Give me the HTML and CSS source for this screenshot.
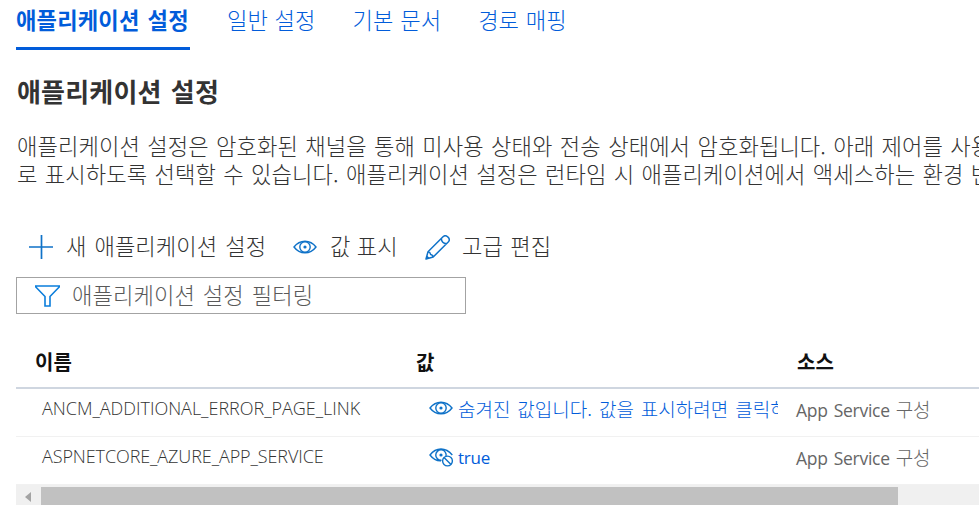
FILE: index.html
```html
<!DOCTYPE html>
<html lang="ko">
<head>
<meta charset="utf-8">
<title>애플리케이션 설정</title>
<link rel="stylesheet" href="styles.css">
</head>
<body>
<svg width="0" height="0" class="defs">
  <symbol id="eye" viewBox="0 0 24 14"><g fill="none" stroke="currentColor" stroke-width="1.4"><path d="M1 7C4 3 8 1.200 12 1.200s8 1.800 11 5.800c-3 4-7 5.800-11 5.800S4 11 1 7z"/><circle cx="12" cy="7" r="5.2"/></g><circle cx="12" cy="7" r="1.6" fill="currentColor"/></symbol>
</svg>
<nav class="tabs">
  <a class="tab active"><span>애플리케이션 설정</span></a>
  <a class="tab">일반 설정</a>
  <a class="tab">기본 문서</a>
  <a class="tab">경로 매핑</a>
</nav>
<h1>애플리케이션 설정</h1>
<p class="intro">애플리케이션 설정은 암호화된 채널을 통해 미사용 상태와 전송 상태에서 암호화됩니다. 아래 제어를 사용<br>로 표시하도록 선택할 수 있습니다. 애플리케이션 설정은 런타임 시 애플리케이션에서 액세스하는 환경 변</p>
<div class="toolbar">
  <a class="cmd add"><svg width="24" height="24" viewBox="0 0 24 24"><path d="M12.500 0v24M0 12h24" fill="none" stroke="currentColor" stroke-width="1.7"/></svg><span>새 애플리케이션 설정</span></a>
  <a class="cmd show"><svg width="24" height="14"><use href="#eye"/></svg><span>값 표시</span></a>
  <a class="cmd edit"><svg width="25" height="25" viewBox="0 0 25 25"><g fill="none" stroke="currentColor" stroke-width="1.5" stroke-linejoin="round"><path d="M1 24l2-7.200L18 1.800c1.300-1.300 3.200-1.300 4.600 0l.6.6c1.300 1.300 1.300 3.200 0 4.600L8.200 22zM3 16.800c1.400.2 2.300.7 2.600 2.600 1.600.2 2.300 1.200 2.600 2.600M16.300 3.500c.2 3 2 5 5.200 5.200"/></g><path d="M1 24l1-3.600L4.600 23z" fill="currentColor"/></svg><span>고급 편집</span></a>
</div>
<div class="filter">
  <svg width="25" height="22" viewBox="0 0 25 22"><path d="M.8 1h23.400v1L15 11.500V21h-5v-9.500L.8 2z" fill="none" stroke="currentColor" stroke-width="1.6"/></svg>
  <span>애플리케이션 설정 필터링</span>
</div>
<div class="grid">
  <div class="row head"><div>이름</div><div>값</div><div>소스</div></div>
  <div class="row">
    <div class="name">ANCM_ADDITIONAL_ERROR_PAGE_LINK</div>
    <div class="value"><svg width="24" height="14"><use href="#eye"/></svg><span class="hidden">숨겨진 값입니다. 값을 표시하려면 클릭하</span></div>
    <div class="source">App Service <span>구성</span></div>
  </div>
  <div class="row">
    <div class="name n2">ASPNETCORE_AZURE_APP_SERVICE</div>
    <div class="value"><svg class="off" width="25" height="19" viewBox="0 0 25 19"><g fill="none" stroke="currentColor" stroke-width="1.4"><path d="M12 12.800C8 13 4 11 1 7c3-4 7-6 11-6s8 2 11.300 6M12.500 12.200a5.200 5.200 0 1 1 4.500-3.900"/><circle cx="18.500" cy="13" r="4.900"/><path d="M15 9.500l7 7"/></g><circle cx="12" cy="7" r="1.600" fill="currentColor"/></svg><span class="true">true</span></div>
    <div class="source">App Service <span>구성</span></div>
  </div>
</div>
<div class="scrollbar"><div class="arrow"><i></i></div><div class="thumb"></div></div>
</body>
</html>
```
FILE: styles.css
```css
* { box-sizing: border-box; }
body {
  margin: 0;
  height: 505px;
  overflow: hidden;
  background: #fff;
  color: #333;
  padding-left: 16px;
  font: 300 22.2px/28px "Noto Sans CJK KR", sans-serif;
  letter-spacing: .08px;
  word-spacing: 1.6px;
  white-space: nowrap;
}
svg { display: block; flex: none; color: #0f72c8; }
.defs { position: absolute; }
.tabs { display: flex; gap: 37px; height: 50px; padding-top: 5px; color: #015cda; word-spacing: .3px; }
.tab { height: 45px; }
.tab.active { width: 174px; font-weight: 600; border-bottom: 3px solid #015cda; letter-spacing: .18px; word-spacing: 1.6px; }
h1 { margin: 26px 0 0; padding-left: 1px; font-size: 26px; line-height: 30px; font-weight: 600; letter-spacing: .2px; }
.intro { margin: 25px 0 0; padding-left: 1px; height: 56px; word-spacing: 1px; }
.toolbar { display: flex; margin-top: 45px; height: 30px; align-items: center; padding-left: 13px; }
.cmd { display: flex; align-items: center; }
.cmd span, .filter span { padding-bottom: 4px; }
.add { gap: 13px; width: 264px; }
.show { gap: 13px; width: 132px; word-spacing: 0; }
.edit { gap: 12px; word-spacing: 1px; }
.filter { display: flex; align-items: center; gap: 12px; width: 450px; height: 37px; margin-top: 15px; padding-left: 18px; border: 1px solid #a3a3a3; color: #595959; }
.filter svg { color: #0a7ddb; }
.grid { margin-top: 23px; font-size: 19px; }
.row { display: grid; grid-template-columns: 381px 381px 201px; align-items: center; height: 48px; padding-bottom: 9px; border-bottom: 1px solid #f1f1f1; }
.head { height: 52px; padding-bottom: 0; border-bottom: 2px solid #cfd6e0; color: #111; font-size: 20px; font-weight: 600; }
.head > div { padding-left: 19px; }
.name { padding: 0 0 1px 26px; font-family: "Open Sans", sans-serif; font-size: 18px; font-weight: 350; letter-spacing: -.02px; }
.n2 { letter-spacing: -.1px; }
.value { display: flex; align-items: center; gap: 5px; padding-left: 32px; color: #015cda; overflow: hidden; }
.off { margin: 3px -1px 0 0; }
.hidden { overflow: hidden; padding-top: 1px; letter-spacing: 0; }
.true { padding-top: 3px; font-family: "Open Sans", sans-serif; font-size: 17px; font-weight: 400; letter-spacing: -.2px; }
.source { padding: 2px 0 0 18px; color: #666; font-family: "Open Sans", sans-serif; font-size: 17.500px; font-weight: 400; letter-spacing: -.25px; }
.source span { font-family: "Noto Sans CJK KR", sans-serif; font-size: 19px; font-weight: 300; }
.scrollbar { display: flex; height: 20px; padding-top: 2px; background: #f0f0f0; }
.arrow { width: 25px; display: flex; align-items: center; padding-left: 9px; }
.arrow i { margin-top: 2px; border: 5px solid transparent; border-left: 0; border-right: 6px solid #a3a3a3; }
.thumb { width: 857px; background: #c1c1c1; }
```
